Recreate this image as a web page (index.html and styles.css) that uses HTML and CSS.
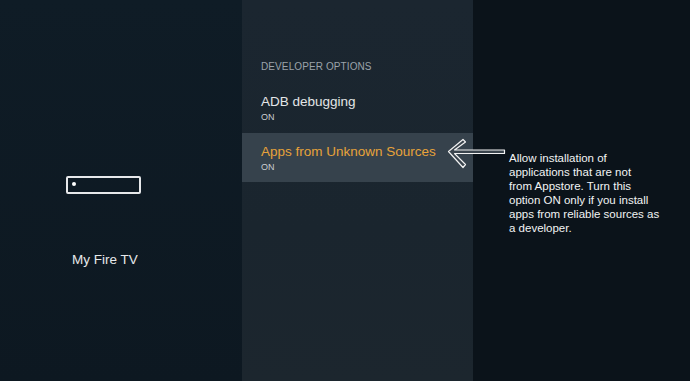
FILE: index.html
```html
<!DOCTYPE html>
<html lang="en">
<head>
    <meta charset="UTF-8">
    <meta name="viewport" content="width=device-width, initial-scale=1.0">
    <title>Developer Options</title>
    <link rel="stylesheet" href="styles.css">
</head>
<body>

<div class="screen">

    <!-- Left nav -->
    <div class="nav">
        <div class="device-icon"><span class="led"></span></div>
        <p class="nav-title">My Fire TV</p>
    </div>

    <!-- Settings list -->
    <div class="menu">
        <h3 class="menu-heading">DEVELOPER OPTIONS</h3>
        <div class="menu-item">
            <div class="item-name">ADB debugging</div>
            <div class="item-value">ON</div>
        </div>
        <div class="menu-item selected">
            <div class="item-name">Apps from Unknown Sources</div>
            <div class="item-value">ON</div>
        </div>
    </div>

    <!-- Help text -->
    <div class="help">
        <p>Allow installation of<br>
           applications that are not<br>
           from Appstore. Turn this<br>
           option ON only if you install<br>
           apps from reliable sources as<br>
           a developer.</p>
    </div>

    <!-- Annotation arrow -->
    <svg class="arrow" width="62" height="34" viewBox="0 0 62 34">
        <path d="M2.5 13.5 L17 1.5 L19.5 4 L8.5 12 L58.5 12 L58.5 15.5 L8.5 15.5 L19.5 26.5 L17 29.5 Z"
              fill="#3a444d" stroke="#f2f2f2" stroke-width="1.2" stroke-linejoin="round"/>
    </svg>

</div>

</body>
</html>
```

FILE: styles.css
```css
html, body {
    margin: 0;
    padding: 0;
}

body {
    font-family: "Liberation Sans", Arial, sans-serif;
    background-color: #0c141b;
    color: #e8eaeb;
}

.screen {
    position: relative;
    display: flex;
    width: 690px;
    height: 381px;
    overflow: hidden;
}

.nav {
    width: 242px;
    background: linear-gradient(180deg, #0f1c26 0%, #0d1821 100%);
    display: flex;
    flex-direction: column;
    align-items: flex-start;
    padding-top: 176px;
    padding-left: 66px;
    box-sizing: border-box;
}

.device-icon {
    width: 71px;
    height: 14px;
    border: 2px solid #e6e8ea;
    border-radius: 2px;
    position: relative;
}

.led {
    position: absolute;
    left: 4px;
    top: 4px;
    width: 4px;
    height: 4px;
    border-radius: 50%;
    background: #fff;
}

.nav-title {
    margin: 58px 0 0 6px;
    font-size: 13.5px;
    color: #e6e8ea;
}

.menu {
    width: 231px;
    background: linear-gradient(180deg, #1b2630 0%, #1a252e 60%, #1c262e 100%);
    padding-top: 61px;
    box-sizing: border-box;
}

.menu-heading {
    margin: 0 0 19px 19px;
    font-size: 10px;
    font-weight: normal;
    color: #9ba3aa;
    letter-spacing: 0.1px;
}

.menu-item {
    height: 42px;
    padding: 2px 0 0 19px;
    box-sizing: border-box;
}

.item-name {
    font-size: 13.5px;
    color: #e4e6e8;
    line-height: 17px;
}

.item-value {
    font-size: 9px;
    color: #c9cdd0;
    margin-top: 2px;
}

.selected {
    height: 49px;
    background-color: #36424c;
    padding-top: 10px;
}

.selected .item-name {
    color: #e7a33a;
}

.help {
    flex: 1;
    background-color: #0b131a;
    padding: 151px 0 0 36px;
}

.help p {
    margin: 0;
    font-size: 11.5px;
    line-height: 14px;
    color: #f2f3f4;
    white-space: nowrap;
}

.arrow {
    position: absolute;
    left: 446px;
    top: 138px;
}
```
